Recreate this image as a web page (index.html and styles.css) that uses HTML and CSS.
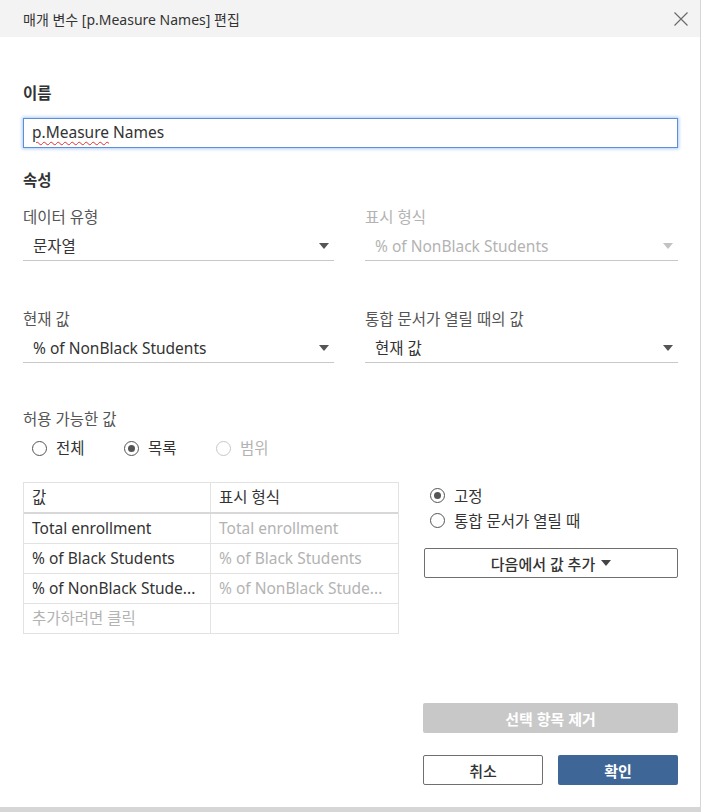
FILE: index.html
```html
<!DOCTYPE html>
<html lang="ko">
<head>
<meta charset="utf-8">
<title>매개 변수 편집</title>
<link rel="stylesheet" href="styles.css">
</head>
<body>
<div class="dialog">
  <div class="header">
    <span class="title">매개 변수 [p.Measure Names] 편집</span>
    <svg class="close" width="16" height="16" viewBox="0 0 16 16"><path d="M1.5 1.5 L14.5 14.5 M14.5 1.5 L1.5 14.5" stroke="#6b6b6b" stroke-width="1.2" fill="none"/></svg>
  </div>
  <div class="content">
    <div class="section-title">이름</div>
    <div class="input"><span class="misspelled">p.Measure</span>&nbsp;Names</div>
    <div class="section-title props">속성</div>
    <div class="grid">
      <div class="field">
        <div class="label">데이터 유형</div>
        <div class="select"><span>문자열</span><span class="caret"></span></div>
      </div>
      <div class="field disabled">
        <div class="label">표시 형식</div>
        <div class="select"><span>% of NonBlack Students</span><span class="caret"></span></div>
      </div>
      <div class="field row2">
        <div class="label">현재 값</div>
        <div class="select"><span>% of NonBlack Students</span><span class="caret"></span></div>
      </div>
      <div class="field row2">
        <div class="label">통합 문서가 열릴 때의 값</div>
        <div class="select"><span>현재 값</span><span class="caret"></span></div>
      </div>
    </div>
    <div class="label allowed">허용 가능한 값</div>
    <div class="radios">
      <div class="radio"><span class="circle"></span>전체</div>
      <div class="radio"><span class="circle checked"></span>목록</div>
      <div class="radio off"><span class="circle"></span>범위</div>
    </div>
    <div class="lower">
      <div class="table">
        <div class="tr head"><div class="td">값</div><div class="td">표시 형식</div></div>
        <div class="tr"><div class="td">Total enrollment</div><div class="td alias">Total enrollment</div></div>
        <div class="tr"><div class="td">% of Black Students</div><div class="td alias">% of Black Students</div></div>
        <div class="tr"><div class="td">% of NonBlack Stude...</div><div class="td alias">% of NonBlack Stude...</div></div>
        <div class="tr"><div class="td alias">추가하려면 클릭</div><div class="td"></div></div>
      </div>
      <div class="side">
        <div class="radio"><span class="circle checked"></span>고정</div>
        <div class="radio"><span class="circle"></span>통합 문서가 열릴 때</div>
        <button class="btn add">다음에서 값 추가 <span class="caret dark"></span></button>
      </div>
    </div>
    <div class="footer">
      <button class="btn remove">선택 항목 제거</button>
      <div class="actions">
        <button class="btn cancel">취소</button>
        <button class="btn ok">확인</button>
      </div>
    </div>
  </div>
</div>
</body>
</html>
```
FILE: styles.css
```css
* { box-sizing: border-box; }
html, body { margin: 0; padding: 0; }
body {
  background: #d6d6d6;
  font-family: "Noto Sans", "Noto Sans CJK KR", sans-serif;
  font-size: 15.5px;
  color: #333;
}
.dialog {
  width: 700px;
  height: 807px;
  background: #fff;
  display: flex;
  flex-direction: column;
}
.header {
  height: 37px;
  background: #f3f3f3;
  display: flex;
  align-items: center;
  justify-content: space-between;
  padding: 0 11px 0 23px;
}
.title { font-size: 14px; color: #333; }
.content {
  flex: 1;
  display: flex;
  flex-direction: column;
  padding: 46px 22px 22px 23px;
}
.section-title {
  font-weight: 600;
  line-height: 20px;
  color: #333;
}
.input {
  margin-top: 15px;
  height: 30px;
  border: 1px solid #5c8fda;
  box-shadow: 0 0 3px 1px rgba(110, 160, 235, 0.55);
  padding-left: 8px;
  line-height: 27px;
  color: #333;
}
.misspelled {
  text-decoration: underline wavy #e03030;
  text-decoration-thickness: 1px;
  text-underline-offset: 3px;
}
.props { margin-top: 22px; }
.grid {
  margin-top: 17px;
  display: grid;
  grid-template-columns: 311px 1fr;
  column-gap: 31px;
}
.label { line-height: 20px; color: #555; }
.field.row2 { margin-top: 48px; }
.select {
  margin-top: 4px;
  height: 30px;
  border-bottom: 1px solid #c8c8c8;
  display: flex;
  align-items: center;
  justify-content: space-between;
  padding: 0 5px 0 10px;
}
.caret {
  width: 0;
  height: 0;
  border-left: 5px solid transparent;
  border-right: 5px solid transparent;
  border-top: 6px solid #555;
}
.disabled .label, .disabled .select { color: #b3b3b3; }
.disabled .caret { border-top-color: #c2c2c2; }
.allowed { margin-top: 46px; }
.radios {
  margin-top: 9px;
  display: flex;
  padding-left: 9px;
}
.radios .radio { width: 92px; }
.radio {
  display: flex;
  align-items: center;
  line-height: 20px;
  height: 20px;
}
.circle {
  width: 15px;
  height: 15px;
  border: 1px solid #555;
  border-radius: 50%;
  margin-right: 9px;
  display: flex;
  align-items: center;
  justify-content: center;
}
.circle.checked::after {
  content: "";
  width: 7px;
  height: 7px;
  border-radius: 50%;
  background: #555;
}
.radio.off { color: #b3b3b3; }
.radio.off .circle { border-color: #c8c8c8; }
.lower {
  margin-top: 24px;
  display: flex;
  gap: 25px;
}
.table {
  width: 376px;
  border: 1px solid #e2e2e2;
}
.tr {
  display: grid;
  grid-template-columns: 186px 1fr;
  height: 30px;
  border-top: 1px solid #e2e2e2;
}
.tr:first-child { border-top: none; height: 29px; }
.tr.head + .tr { border-top: 2px solid #d8d8d8; height: 31px; }
.td {
  padding-left: 8px;
  line-height: 28px;
  white-space: nowrap;
  overflow: hidden;
}
.td + .td { border-left: 1px solid #e2e2e2; }
.alias { color: #b3b3b3; }
.side {
  width: 254px;
  display: flex;
  flex-direction: column;
  padding-top: 1px;
}
.side .radio { padding-left: 6px; height: 25px; }
.btn {
  font-family: inherit;
  font-size: 15px;
  height: 30px;
  border-radius: 2px;
  background: #fff;
  border: 1px solid #6f6f6f;
  color: #333;
  display: flex;
  align-items: center;
  justify-content: center;
  gap: 6px;
  padding: 0;
}
.add { margin-top: 15px; width: 254px; font-weight: 500; }
.caret.dark { border-top-color: #444; }
.footer {
  margin-top: auto;
  align-self: flex-end;
  width: 255px;
  display: flex;
  flex-direction: column;
  gap: 22px;
}
.remove {
  width: 255px;
  background: #c8c8c8;
  border: none;
  color: #fff;
  font-weight: 700;
}
.actions {
  display: flex;
  justify-content: space-between;
}
.cancel { width: 120px; font-weight: 500; }
.ok {
  width: 120px;
  background: #3e6696;
  border: none;
  color: #fff;
  font-weight: 700;
}
```
